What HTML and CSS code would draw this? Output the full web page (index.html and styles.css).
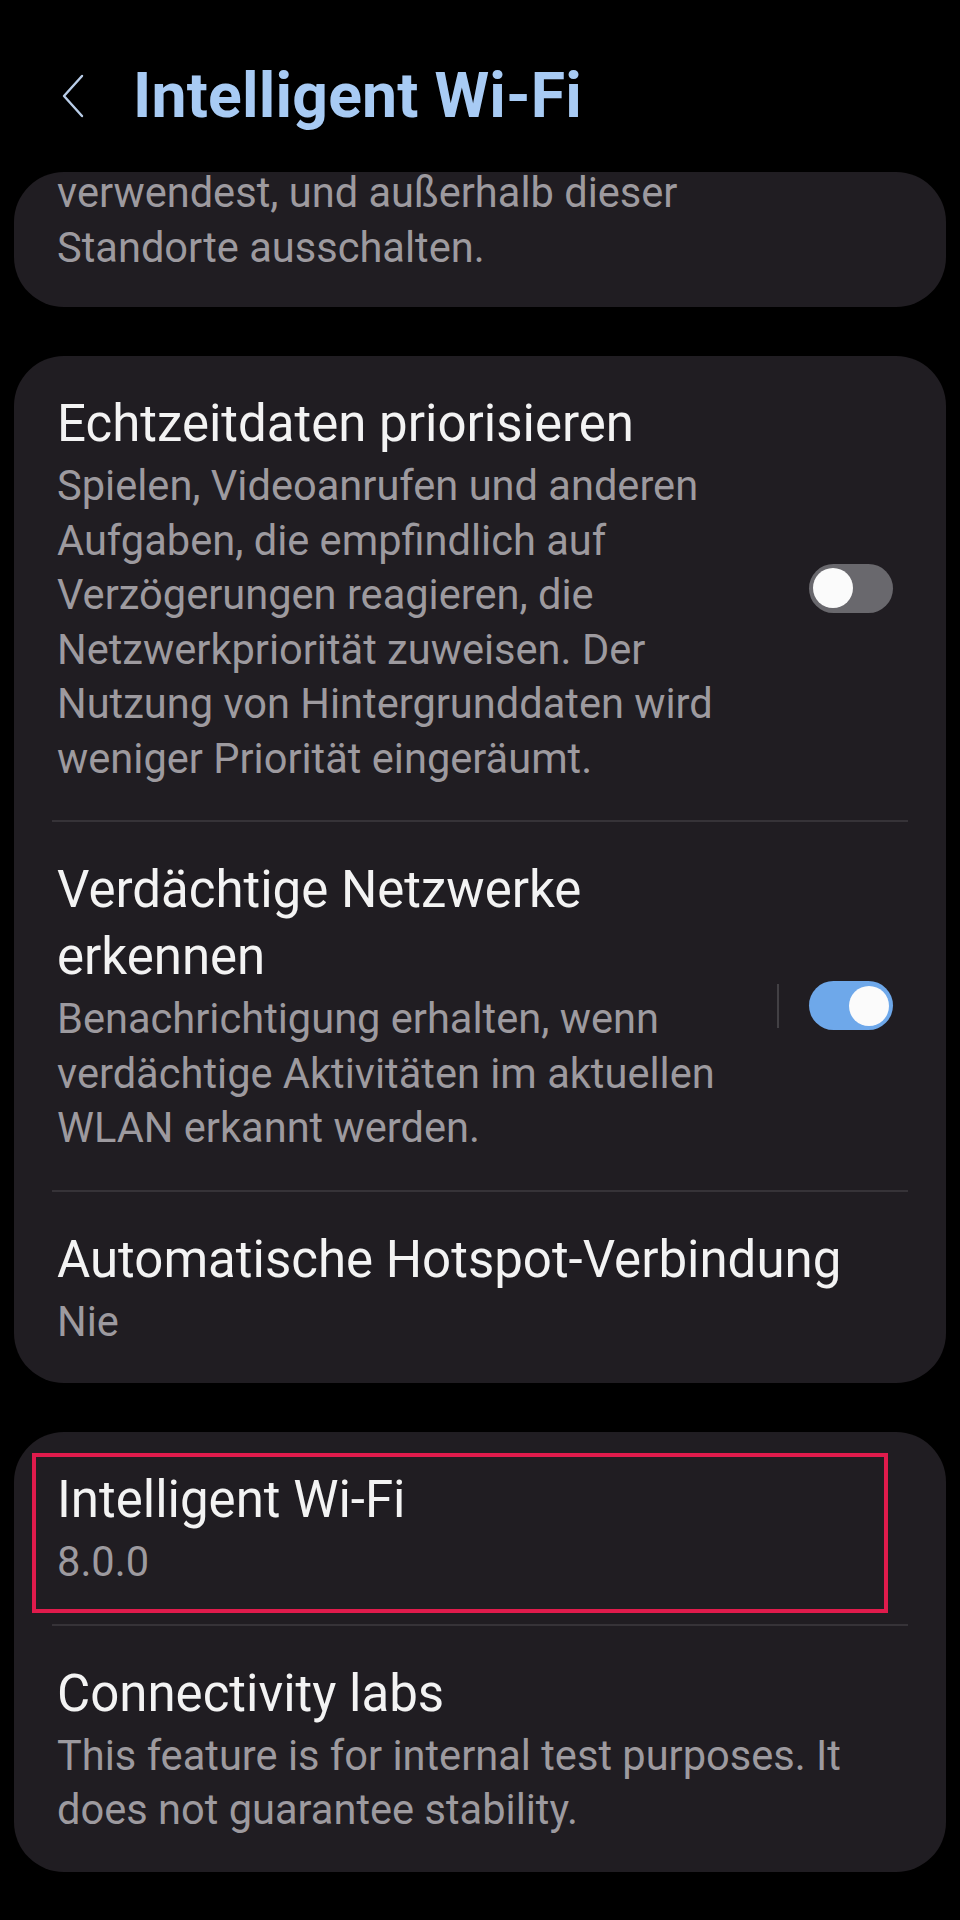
FILE: index.html
```html
<!DOCTYPE html>
<html lang="de">
<head>
<meta charset="utf-8">
<title>Intelligent Wi-Fi</title>
<link rel="stylesheet" href="styles.css">
</head>
<body>
<div class="screen">
  <header class="appbar">
    <span class="back" aria-label="Zurück">
      <svg viewBox="0 0 24 44" width="24" height="44"><path d="M21 2 L3 22 L21 42" fill="none" stroke="#b9cde8" stroke-width="2.4" stroke-linecap="round" stroke-linejoin="round"/></svg>
    </span>
    <h1 class="appbar-title">Intelligent Wi-Fi</h1>
  </header>

  <section class="card card-clipped">
    <div class="item-text narrow">
      <div class="summary">verwendest, und außerhalb dieser Standorte ausschalten.</div>
    </div>
  </section>

  <section class="card">
    <div class="item">
      <div class="item-text">
        <div class="title">Echtzeitdaten priorisieren</div>
        <div class="summary">Spielen, Videoanrufen und anderen Aufgaben, die empfindlich auf Verzögerungen reagieren, die Netzwerkpriorität zuweisen. Der Nutzung von Hintergrunddaten wird weniger Priorität eingeräumt.</div>
      </div>
      <div class="widget">
        <span class="switch"><span class="thumb"></span></span>
      </div>
    </div>
    <div class="divider"></div>
    <div class="item">
      <div class="item-text">
        <div class="title">Verdächtige Netzwerke erkennen</div>
        <div class="summary">Benachrichtigung erhalten, wenn verdächtige Aktivitäten im aktuellen WLAN erkannt werden.</div>
      </div>
      <div class="widget">
        <span class="vsep"></span>
        <span class="switch on"><span class="thumb"></span></span>
      </div>
    </div>
    <div class="divider"></div>
    <div class="item">
      <div class="item-text">
        <div class="title">Automatische Hotspot-Verbindung</div>
        <div class="summary">Nie</div>
      </div>
    </div>
  </section>

  <section class="card card-last">
    <div class="item">
      <div class="item-text">
        <div class="title">Intelligent Wi-Fi</div>
        <div class="summary">8.0.0</div>
      </div>
    </div>
    <div class="divider"></div>
    <div class="item">
      <div class="item-text">
        <div class="title">Connectivity labs</div>
        <div class="summary">This feature is for internal test purposes. It does not guarantee stability.</div>
      </div>
    </div>
    <div class="highlight"></div>
  </section>
</div>
</body>
</html>
```
FILE: styles.css
```css
* { box-sizing: border-box; }
html, body { margin: 0; padding: 0; background: #000; }
body {
  width: 960px;
  height: 1920px;
  overflow: hidden;
  font-family: Roboto, "Noto Sans", "Liberation Sans", sans-serif;
  color: #f2f2f2;
}
.screen { display: flex; flex-direction: column; }

.appbar {
  display: flex;
  align-items: center;
  height: 80px;
  margin-top: 56px;
  padding-left: 61px;
}
.back { display: flex; width: 24px; height: 44px; margin-right: 48px; }
.appbar-title {
  margin: 0;
  font-size: 62.5px;
  font-weight: 700;
  line-height: 80px;
  color: #a8cbf4;
  letter-spacing: 0.2px;
}

.card {
  position: relative;
  margin: 0 14px 49px;
  background: #201d22;
  border-radius: 50px;
  padding: 0 53px 0 43px;
}
.card-clipped {
  margin-top: 36px;
  height: 135px;
  padding-top: 1px;
  padding-bottom: 34px;
}
.card-clipped .summary { margin-top: -7px; }
.narrow { max-width: 690px; }

.item {
  display: flex;
  align-items: center;
  padding: 34px 0;
}
.item-text { flex: 1; min-width: 0; }
.title {
  font-size: 51px;
  line-height: 67px;
  color: #f3f3f3;
}
.summary {
  font-size: 41.6px;
  line-height: 54.5px;
  color: #9d9a9f;
}
.title + .summary { margin-top: 2px; }

.widget {
  flex: 0 0 145px;
  display: flex;
  align-items: center;
  justify-content: flex-end;
  gap: 30px;
}
.vsep {
  width: 2px;
  height: 44px;
  background: #424044;
}
.switch {
  position: relative;
  display: block;
  width: 84px;
  height: 49px;
  border-radius: 25px;
  background: #69686d;
}
.switch .thumb {
  position: absolute;
  top: 4.5px;
  left: 4px;
  width: 40px;
  height: 40px;
  border-radius: 50%;
  background: #fbfbfb;
}
.switch.on { background: #6ea8ea; }
.switch.on .thumb { left: 40px; }

.divider {
  height: 2px;
  margin: 0 -15px 0 -5px;
  background: #363338;
}

.highlight {
  position: absolute;
  left: 18px;
  top: 21px;
  width: 856px;
  height: 160px;
  border: 4px solid #e01b4c;
  pointer-events: none;
}
```
